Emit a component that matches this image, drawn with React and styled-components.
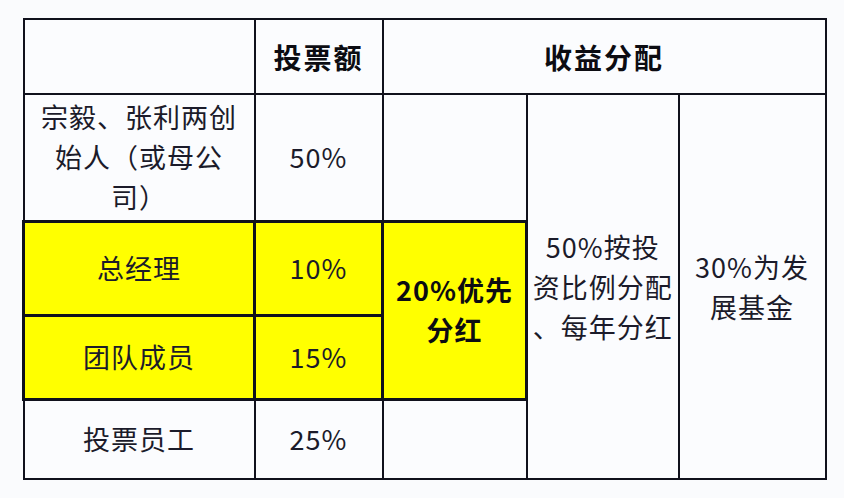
import styled, { createGlobalStyle } from "styled-components";

const GlobalStyle = createGlobalStyle`
  html, body {
    margin: 0;
    padding: 0;
    background: #fafbfd;
  }
  body {
    font-family: "Noto Sans CJK SC", "Noto Sans", sans-serif;
    color: #1b1b2a;
  }
`;

const Page = styled.div`
  width: 844px;
  height: 498px;
  padding: 18px 0 0 22px;
  box-sizing: border-box;
  overflow: hidden;
`;

const Table = styled.table`
  border-collapse: collapse;
  table-layout: fixed;
  width: 802px;
  background: #fbfcfe;
`;

const Row = styled.tr`
  height: ${(p) => p.$h}px;
`;

const Cell = styled.td`
  border: ${(p) => (p.$yellow ? "3px" : "2px")} solid #10111c;
  background: ${(p) => (p.$yellow ? "#ffff00" : "#fbfcfe")};
  padding: 0 4px;
  text-align: center;
  vertical-align: middle;
  font-size: 27px;
  line-height: 40px;
  letter-spacing: 1px;
  font-weight: ${(p) => (p.$bold ? 700 : 400)};
  color: ${(p) => (p.$bold ? "#0c0c12" : "#1b1b2a")};
  white-space: nowrap;
`;

const HeadCell = styled(Cell)`
  font-size: 28px;
  letter-spacing: 2px;
  font-weight: 700;
  color: #0c0c12;
`;

const rows = [
  { name: "总经理", share: "10%", h: 94 },
  { name: "团队成员", share: "15%", h: 84 },
];

export default function App() {
  return (
    <>
      <GlobalStyle />
      <Page>
        <Table>
          <colgroup>
            <col style={{ width: 231 }} />
            <col style={{ width: 128 }} />
            <col style={{ width: 144 }} />
            <col style={{ width: 152 }} />
            <col style={{ width: 147 }} />
          </colgroup>
          <tbody>
            <Row $h={75}>
              <HeadCell />
              <HeadCell>投票额</HeadCell>
              <HeadCell colSpan={3}>收益分配</HeadCell>
            </Row>
            <Row $h={127}>
              <Cell>
                宗毅、张利两创
                <br />
                始人（或母公
                <br />
                司）
              </Cell>
              <Cell>50%</Cell>
              <Cell />
              <Cell rowSpan={4}>
                50%按投
                <br />
                资比例分配
                <br />
                、每年分红
              </Cell>
              <Cell rowSpan={4}>
                30%为发
                <br />
                展基金
              </Cell>
            </Row>
            {rows.map((r, i) => (
              <Row key={r.name} $h={r.h}>
                <Cell $yellow>{r.name}</Cell>
                <Cell $yellow>{r.share}</Cell>
                {i === 0 && (
                  <Cell $yellow $bold rowSpan={2}>
                    20%优先
                    <br />
                    分红
                  </Cell>
                )}
              </Row>
            ))}
            <Row $h={80}>
              <Cell>投票员工</Cell>
              <Cell>25%</Cell>
              <Cell />
            </Row>
          </tbody>
        </Table>
      </Page>
    </>
  );
}
